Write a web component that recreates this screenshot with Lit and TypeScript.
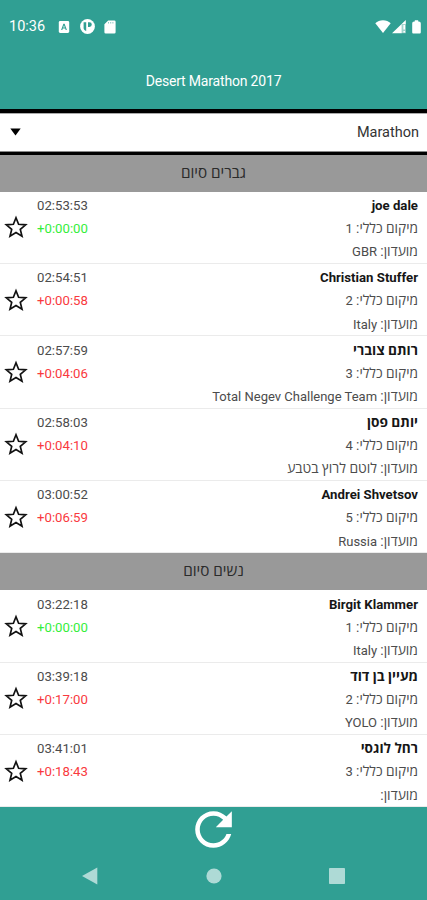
import { LitElement, html, css } from "lit";
import { customElement, property } from "lit/decorators.js";

interface Result {
  name: string;
  place: number;
  club: string;
  time: string;
  gap: string;
}

interface Section {
  title: string;
  results: Result[];
}

const SECTIONS: Section[] = [
  {
    title: "גברים סיום",
    results: [
      { name: "joe dale", place: 1, club: "GBR", time: "02:53:53", gap: "+0:00:00" },
      { name: "Christian Stuffer", place: 2, club: "Italy", time: "02:54:51", gap: "+0:00:58" },
      { name: "רותם צוברי", place: 3, club: "Total Negev Challenge Team", time: "02:57:59", gap: "+0:04:06" },
      { name: "יותם פסן", place: 4, club: "לוטם לרוץ בטבע", time: "02:58:03", gap: "+0:04:10" },
      { name: "Andrei Shvetsov", place: 5, club: "Russia", time: "03:00:52", gap: "+0:06:59" },
    ],
  },
  {
    title: "נשים סיום",
    results: [
      { name: "Birgit Klammer", place: 1, club: "Italy", time: "03:22:18", gap: "+0:00:00" },
      { name: "מעיין בן דוד", place: 2, club: "YOLO", time: "03:39:18", gap: "+0:17:00" },
      { name: "רחל לוגסי", place: 3, club: "", time: "03:41:01", gap: "+0:18:43" },
    ],
  },
];

const isHebrew = (text: string) => /[\u0590-\u05ff]/.test(text);

@customElement("status-bar")
class StatusBar extends LitElement {
  static styles = css`
    :host { display: flex; align-items: center; height: 53px; padding: 0 6px 0 9px; color: #fff; }
    .clock { font-size: 14.5px; width: 49px; }
    .left { display: flex; align-items: center; flex: 1; }
    .right { display: flex; align-items: center; }
    svg { display: block; fill: #fff; }
    .app { margin-right: 10px; }
    .disc { margin-right: 9px; }
    .wifi { margin-right: 1px; }
    .signal { margin-right: 6px; }
    .hole { fill: #309f93; }
    .faint { opacity: 0.55; }
  `;
  render() {
    return html`
      <div class="left">
        <span class="clock">10:36</span>
        <svg class="app" width="12" height="12" viewBox="0 0 12 12">
          <rect x="0.8" y="0" width="10.4" height="12" rx="1.4"></rect>
          <path class="hole" fill-rule="evenodd" d="M5.4 2.8h1.2L8.9 9H7.7L7.2 7.6H4.8L4.3 9H3.1zM6 4.3 5.2 6.6h1.6z"></path>
        </svg>
        <svg class="disc" width="15" height="15" viewBox="0 0 15 15">
          <circle cx="7.5" cy="7.5" r="7.4"></circle>
          <path class="hole" d="M3.600 3.200h2.600v8.800c-1.700-.5-2.600-1.700-2.600-3zM8 3.200h1.400a2.300 2.300 0 0 1 0 4.800H8z"></path>
        </svg>
        <svg width="12" height="14" viewBox="0 0 12 14">
          <path d="M4.200.5H10.300a1.300 1.300 0 0 1 1.300 1.300v10.400a1.300 1.300 0 0 1-1.300 1.300H1.700A1.300 1.300 0 0 1 .4 12.200V4.300z"></path>
          <path class="hole faint" d="M4 2h1v1.500H4zM6.200 2h1v1.500h-1zM8.400 2h1v1.500h-1z"></path>
        </svg>
      </div>
      <div class="right">
        <svg class="wifi" width="16" height="14" viewBox="0 0 16 14">
          <path d="M8 13 .3 3.300C2.400 1.400 5 .3 8 .3s5.600 1.100 7.700 3z"></path>
        </svg>
        <svg class="signal" width="14" height="14" viewBox="0 0 14 14">
          <path d="M0 13.200 13.800 0v4.200h-4v9z"></path>
          <path class="faint" d="M9.800 4.200h4v9h-4z"></path>
          <path d="M11.400 5h1.600v4.600h-1.600zM11.400 11h1.600v1.400h-1.600z"></path>
        </svg>
        <svg width="9" height="14" viewBox="0 0 9 14">
          <path d="M2.800.2h3.400v1.300h.6C8 1.500 8.800 2.300 8.800 3.400v8.900c0 .8-.5 1.300-1.300 1.300h-6C.7 13.600.2 13.100.2 12.300V3.400c0-1.100.8-1.900 2-1.900h.6z"></path>
        </svg>
      </div>
    `;
  }
}

@customElement("result-row")
class ResultRow extends LitElement {
  @property({ attribute: false }) result!: Result;
  static styles = css`
    :host {
      display: flex; height: 72.3px; box-sizing: border-box;
      border-bottom: 1.5px solid #ebebeb; padding: 2.3px 9px 0 4px; background: #fff; color: #4c4c4c;
      font-size: 13px; line-height: 23.2px;
    }
    .star { display: block; width: 24px; height: 24px; margin: 21.5px 9px 0 0; fill: none; stroke: #111; stroke-width: 1.7; }
    .times { flex: 1; font-size: 13.2px; }
    .gap { color: #f93a3e; }
    .gap.lead { color: #35ee3b; }
    .info { direction: rtl; text-align: right; display: flex; flex-direction: column; align-items: flex-start; white-space: nowrap; }
    .line { height: 23.2px; }
    .name { font-weight: 700; color: #161616; font-size: 13.2px; }
    .he { font-size: 1.055em; }
    .name .he { font-size: 1.035em; }
    .club .he { font-size: 1.07em; }
  `;
  private script(text: string) {
    return isHebrew(text) ? html`<span class="he">${text}</span>` : text;
  }
  render() {
    const r = this.result;
    return html`
      <svg class="star" viewBox="0 0 24 24">
        <path d="M12 2.800 14.600 9.300 21.700 9.800 16.300 14.400 18 21.200 12 17.600 6 21.200 7.700 14.400 2.300 9.800 9.400 9.300z"></path>
      </svg>
      <div class="times">
        <div>${r.time}</div>
        <div class=${r.gap === "+0:00:00" ? "gap lead" : "gap"}>${r.gap}</div>
      </div>
      <div class="info">
        <div class="line name">${this.script(r.name)}</div>
        <div class="line"><span class="he">מיקום כללי:</span> ${r.place}</div>
        <div class="line club"><span class="he">מועדון:</span> ${this.script(r.club)}</div>
      </div>
    `;
  }
}

@customElement("app-root")
class AppRoot extends LitElement {
  static styles = css`
    :host {
      display: flex; flex-direction: column; height: 900px; width: 427px; overflow: hidden;
      font-family: Roboto, "Open Sans", "Noto Sans", sans-serif; background: #309f93;
    }
    .title { height: 56px; line-height: 57px; text-align: center; color: #fff; font-size: 14px; letter-spacing: -0.18px; }
    .picker {
      display: flex; align-items: center; justify-content: space-between; box-sizing: border-box;
      height: 45.6px; border-top: 4px solid #000; border-bottom: 3px solid #000;
      box-shadow: inset 0 1px #aaa, inset 0 -1px #888;
      padding: 0 8px 0 10px; background: #fff; color: #333; font-size: 14.5px;
    }
    .caret { display: block; }
    .list { flex: 1; min-height: 0; overflow: hidden; background: #fff; }
    .heading {
      height: 37.100px; line-height: 37px; background: #999; color: #2b2b2b;
      text-align: center; font-size: 15.300px; direction: rtl;
    }
    .footer { height: 93px; }
    .refresh { display: flex; justify-content: center; height: 44px; align-items: center; }
    .nav { display: flex; height: 49px; align-items: center; justify-content: space-between; padding: 0 82px; }
    .refresh svg { fill: #fff; }
    .nav svg { fill: #aedad6; display: block; }
  `;
  render() {
    return html`
      <status-bar></status-bar>
      <div class="title">Desert Marathon 2017</div>
      <div class="picker">
        <svg class="caret" width="11" height="8" viewBox="0 0 11 8"><path d="M.3.500h10.400L5.500 7.500z"></path></svg>
        <span>Marathon</span>
      </div>
      <div class="list">
        ${SECTIONS.map(
          (s) => html`
            <div class="heading">${s.title}</div>
            ${s.results.map((r) => html`<result-row .result=${r}></result-row>`)}
          `
        )}
      </div>
      <div class="footer">
        <div class="refresh">
          <svg width="55" height="55" viewBox="0 0 24 24">
            <path d="M17.650 6.350C16.200 4.900 14.210 4 12 4c-4.420 0-7.990 3.580-7.990 8s3.570 8 7.990 8c3.730 0 6.840-2.550 7.730-6h-2.080c-.82 2.330-3.040 4-5.650 4-3.310 0-6-2.690-6-6s2.690-6 6-6c1.660 0 3.140.69 4.220 1.780L13 11h7V4l-2.350 2.350z"></path>
          </svg>
        </div>
        <div class="nav">
          <svg width="16" height="18" viewBox="0 0 16 18"><path d="M0 9 15.300.5v17z"></path></svg>
          <svg width="16" height="16" viewBox="0 0 16 16"><circle cx="8" cy="8" r="7.600"></circle></svg>
          <svg width="16" height="16" viewBox="0 0 16 16"><rect width="16" height="16" rx="0.800"></rect></svg>
        </div>
      </div>
    `;
  }
}
